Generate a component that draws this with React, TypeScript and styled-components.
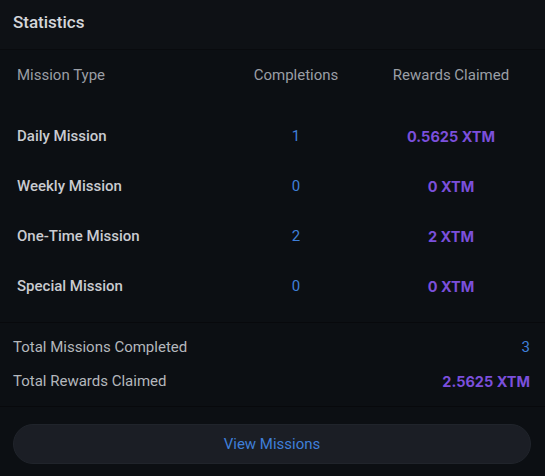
import React from "react";
import styled, { createGlobalStyle } from "styled-components";

const Global = createGlobalStyle`
  html, body { margin: 0; padding: 0; background: #0c0f13; }
  body { font-family: Roboto, "Liberation Sans", sans-serif; -webkit-font-smoothing: antialiased; }
`;

const Panel = styled.div`
  width: 545px;
  height: 476px;
  background: #0c0f13;
  display: flex;
  flex-direction: column;
  overflow: hidden;
`;

const Header = styled.div`
  box-sizing: border-box;
  height: 50px;
  padding: 0 13px 5px;
  display: flex;
  align-items: center;
  background: #0e1115;
  border-bottom: 1px solid #090b0e;
  color: #d4d6da;
  font-size: 17px;
  font-weight: 500;
`;

const TableSection = styled.div`
  padding: 0 5px 11px;
  border-bottom: 1px solid #08090c;
`;

const Row = styled.div<{ $head?: boolean }>`
  display: grid;
  grid-template-columns: 225px 132px 1fr;
  height: 50px;
  align-items: center;
  margin-bottom: ${(p) => (p.$head ? "11px" : "0")};
`;

const HeadCell = styled.div<{ $center?: boolean }>`
  color: #9a9ea5;
  font-size: 15px;
  font-weight: 400;
  padding-left: ${(p) => (p.$center ? "0" : "12px")};
  text-align: ${(p) => (p.$center ? "center" : "left")};
`;

const LabelCell = styled.div`
  color: #c9cbd0;
  font-size: 15px;
  font-weight: 500;
  padding-left: 12px;
`;

const CountCell = styled.div`
  color: #3f7fd9;
  font-size: 15px;
  font-weight: 400;
  text-align: center;
`;

const XtmCell = styled.div`
  color: #7b4fdc;
  font-family: Inter, "DejaVu Sans", sans-serif;
  font-size: 14.5px;
  font-weight: 700;
  text-align: center;
`;

const Summary = styled.div`
  padding: 7px 15px 8px 13px;
  border-bottom: 1px solid #08090c;
  display: flex;
  flex-direction: column;
`;

const SummaryRow = styled.div`
  height: 34px;
  display: flex;
  align-items: center;
  justify-content: space-between;
`;

const SummaryLabel = styled.span`
  color: #b4b7bc;
  font-size: 15px;
  font-weight: 400;
`;

const SummaryCount = styled.span`
  color: #3f7fd9;
  font-size: 15px;
  font-weight: 400;
`;

const SummaryXtm = styled.span`
  color: #7b4fdc;
  font-family: Inter, "DejaVu Sans", sans-serif;
  font-size: 14.5px;
  font-weight: 700;
`;

const Footer = styled.div`
  padding: 17px 14px 0 13px;
`;

const Button = styled.button`
  width: 100%;
  height: 40px;
  border-radius: 20px;
  background: #1b1e25;
  border: 1px solid #20242b;
  color: #3f7fd9;
  font-family: Roboto, "Liberation Sans", sans-serif;
  font-size: 15px;
  font-weight: 400;
  cursor: pointer;
`;

const missions = [
  { name: "Daily Mission", count: 1, reward: "0.5625 XTM" },
  { name: "Weekly Mission", count: 0, reward: "0 XTM" },
  { name: "One-Time Mission", count: 2, reward: "2 XTM" },
  { name: "Special Mission", count: 0, reward: "0 XTM" },
];

export default function App() {
  return (
    <>
      <Global />
      <Panel>
        <Header>Statistics</Header>
        <TableSection>
          <Row $head>
            <HeadCell>Mission Type</HeadCell>
            <HeadCell $center>Completions</HeadCell>
            <HeadCell $center>Rewards Claimed</HeadCell>
          </Row>
          {missions.map((m) => (
            <Row key={m.name}>
              <LabelCell>{m.name}</LabelCell>
              <CountCell>{m.count}</CountCell>
              <XtmCell>{m.reward}</XtmCell>
            </Row>
          ))}
        </TableSection>
        <Summary>
          <SummaryRow>
            <SummaryLabel>Total Missions Completed</SummaryLabel>
            <SummaryCount>3</SummaryCount>
          </SummaryRow>
          <SummaryRow>
            <SummaryLabel>Total Rewards Claimed</SummaryLabel>
            <SummaryXtm>2.5625 XTM</SummaryXtm>
          </SummaryRow>
        </Summary>
        <Footer>
          <Button>View Missions</Button>
        </Footer>
      </Panel>
    </>
  );
}
